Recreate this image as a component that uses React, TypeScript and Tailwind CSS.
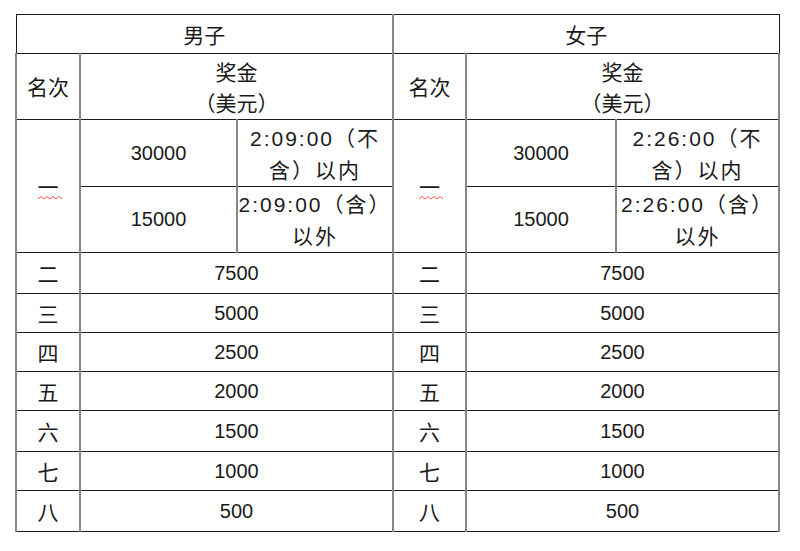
const cjk = "font-['Noto_Sans_CJK_SC',sans-serif]";
const latin = "font-['Liberation_Sans','Noto_Sans_CJK_SC',sans-serif]";

const places = [
  ["二", "7500"],
  ["三", "5000"],
  ["四", "2500"],
  ["五", "2000"],
  ["六", "1500"],
  ["七", "1000"],
  ["八", "500"],
];

const rowHeights = ["h-[41px]", "h-[39px]", "h-[39px]", "h-[39px]", "h-[41px]", "h-[39px]", "h-[41px]"];

// horizontal rules are dark and thin, vertical ones grey and a bit wider
const cell = "border-y border-y-[#1c1c1c] border-x-2 border-x-[#868686] text-center align-middle p-0";
const amountCell = `${cell} ${latin} text-[20px]`;

function FirstPlace() {
  return (
    <span className="relative inline-block">
      一
      <svg className="absolute left-0 top-[24px]" width="25" height="6" viewBox="0 0 25 6">
        <polyline
          points="0,4 3,1.5 6,4 9,1.5 12,4 15,1.5 18,4 21,1.5 24,4"
          fill="none"
          stroke="#ff5656"
          strokeWidth="1"
        />
      </svg>
    </span>
  );
}

function Time({ clock, first, second }: { clock: string; first: string; second: string }) {
  return (
    <td className={`${cell} tracking-[2px]`}>
      <span className={latin}>{clock}</span>
      {first}
      <br />
      {second}
    </td>
  );
}

export default function App() {
  return (
    <div className="bg-white min-h-screen pt-[14px] pl-[15px] text-[#1a1a1a]">
      <table className={`border-collapse table-fixed w-[763px] text-[21px] leading-[31px] ${cjk}`}>
        <colgroup>
          <col className="w-[64px]" />
          <col className="w-[157px]" />
          <col className="w-[156px]" />
          <col className="w-[73px]" />
          <col className="w-[150px]" />
          <col className="w-[163px]" />
        </colgroup>
        <tbody>
          <tr className="h-[39px]">
            <td colSpan={3} className={`${cell} border-l-[#1c1c1c] border-l`}>男子</td>
            <td colSpan={3} className={`${cell} border-r-[#1c1c1c] border-r`}>女子</td>
          </tr>
          <tr className="h-[66px]">
            <td className={cell}>名次</td>
            <td colSpan={2} className={cell}>
              奖金
              <br />
              （美元）
            </td>
            <td className={cell}>名次</td>
            <td colSpan={2} className={cell}>
              奖金
              <br />
              （美元）
            </td>
          </tr>
          <tr className="h-[67px]">
            <td rowSpan={2} className={cell}>
              <FirstPlace />
            </td>
            <td className={amountCell}>30000</td>
            <Time clock="2:09:00" first="（不" second="含）以内" />
            <td rowSpan={2} className={cell}>
              <FirstPlace />
            </td>
            <td className={amountCell}>30000</td>
            <Time clock="2:26:00" first="（不" second="含）以内" />
          </tr>
          <tr className="h-[66px]">
            <td className={amountCell}>15000</td>
            <Time clock="2:09:00" first="（含）" second="以外" />
            <td className={amountCell}>15000</td>
            <Time clock="2:26:00" first="（含）" second="以外" />
          </tr>
          {places.map(([name, amount], i) => (
            <tr key={name} className={rowHeights[i]}>
              <td className={cell}>{name}</td>
              <td colSpan={2} className={amountCell}>{amount}</td>
              <td className={cell}>{name}</td>
              <td colSpan={2} className={amountCell}>{amount}</td>
            </tr>
          ))}
        </tbody>
      </table>
    </div>
  );
}
